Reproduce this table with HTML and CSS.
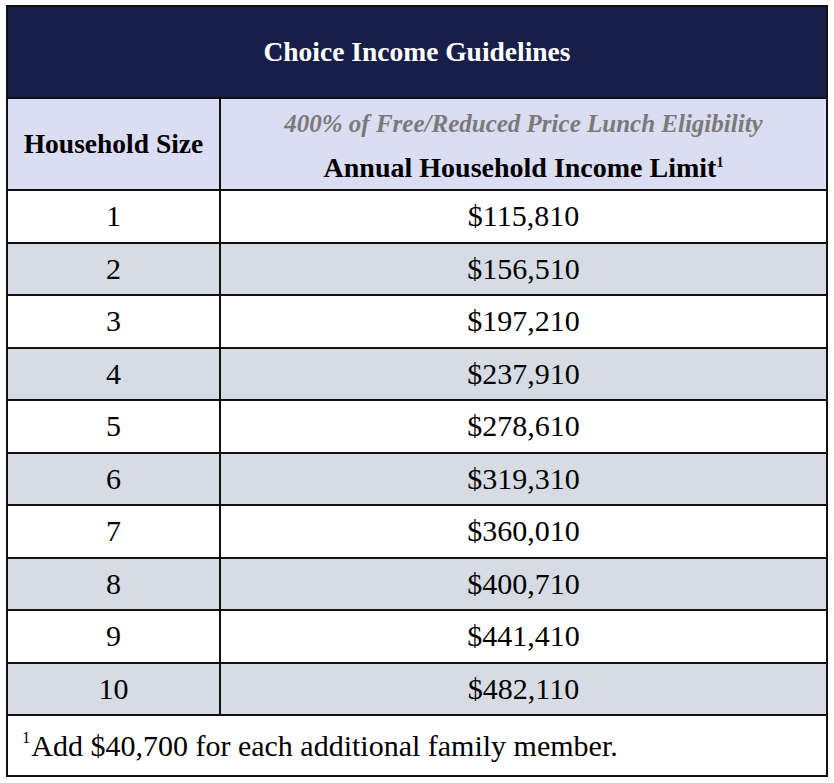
FILE: index.html
```html
<!DOCTYPE html>
<html>
<head>
<meta charset="utf-8">
<link rel="stylesheet" href="styles.css">
</head>
<body>
<table class="guide">
  <colgroup><col class="c1"><col class="c2"></colgroup>
  <thead>
    <tr class="title-row"><th colspan="2">Choice Income Guidelines</th></tr>
    <tr class="sub-row">
      <th class="size-h">Household Size</th>
      <th class="limit-h">
        <div class="pct">400% of Free/Reduced Price Lunch Eligibility</div>
        <div class="ann">Annual Household Income Limit<sup>1</sup></div>
      </th>
    </tr>
  </thead>
  <tbody>
    <tr><td>1</td><td>$115,810</td></tr>
    <tr class="alt"><td>2</td><td>$156,510</td></tr>
    <tr><td>3</td><td>$197,210</td></tr>
    <tr class="alt"><td>4</td><td>$237,910</td></tr>
    <tr><td>5</td><td>$278,610</td></tr>
    <tr class="alt"><td>6</td><td>$319,310</td></tr>
    <tr><td>7</td><td>$360,010</td></tr>
    <tr class="alt"><td>8</td><td>$400,710</td></tr>
    <tr><td>9</td><td>$441,410</td></tr>
    <tr class="alt"><td>10</td><td>$482,110</td></tr>
    <tr class="foot"><td colspan="2"><sup>1</sup>Add $40,700 for each additional family member.</td></tr>
  </tbody>
</table>
</body>
</html>
```
FILE: styles.css
```css
html, body {
  margin: 0;
  padding: 0;
  background: #ffffff;
}
body {
  padding: 5px 0 0 6px;
  font-family: "Liberation Serif", "Times New Roman", serif;
  color: #000;
}
.guide {
  border-collapse: collapse;
  width: 822px;
  border: 2px solid #111;
}
.c1 { width: 213px; }
.guide th, .guide td {
  border: 2px solid #111;
  text-align: center;
  padding: 0;
}
.title-row th {
  background: #181e4a;
  color: #fff;
  font-size: 27.5px;
  font-weight: bold;
  height: 90px;
}
.sub-row th {
  background: #dbddf2;
  height: 90px;
}
.size-h {
  font-size: 27.5px;
  font-weight: bold;
}
.guide th.limit-h {
  vertical-align: top;
  padding-top: 10px;
  height: 80px;
}
.pct {
  font-style: italic;
  font-weight: bold;
  color: #7a7a7a;
  font-size: 25px;
  line-height: 29px;
  margin-bottom: 14px;
}
.ann {
  font-size: 28px;
  line-height: 32px;
  font-weight: bold;
}
.ann sup {
  font-size: 0.5em;
  vertical-align: 0.7em;
  line-height: 0;
}
tbody td {
  height: 50.5px;
  font-size: 30px;
  background: #fff;
}
tbody tr.alt td {
  background: #d6dbe4;
}
.guide tr.foot td {
  text-align: left;
  font-size: 30px;
  height: 59px;
  padding-left: 14px;
}
.foot sup {
  font-size: 0.55em;
  vertical-align: 0.75em;
  line-height: 0;
  margin-right: 1px;
}
```
